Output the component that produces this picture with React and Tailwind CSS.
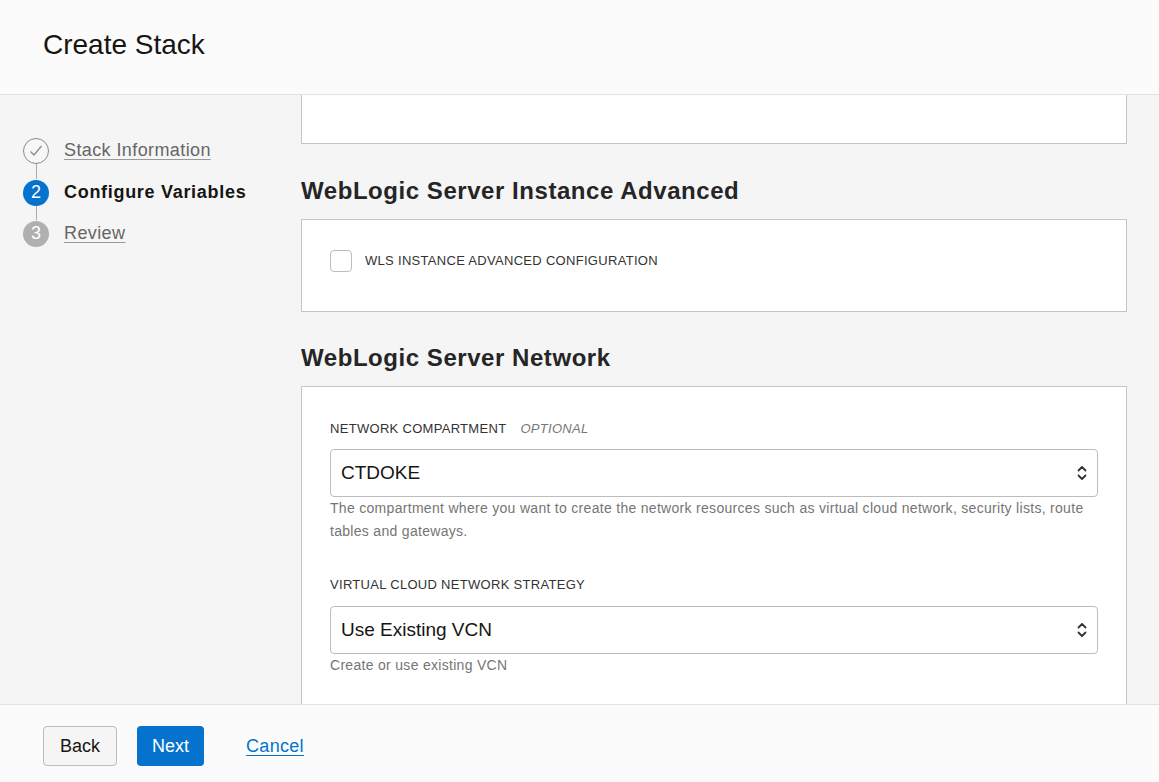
import React from 'react';

const font = { fontFamily: '"Liberation Sans", Arial, sans-serif' };

function Chevrons() {
  return (
    <svg className="w-[14px] h-[18px] text-[#333]" viewBox="0 0 14 18" fill="none" stroke="currentColor" strokeWidth="1.8" strokeLinecap="round" strokeLinejoin="round">
      <path d="M3.5 6.5 7 3l3.5 3.5" />
      <path d="M3.5 11.5 7 15l3.5-3.5" />
    </svg>
  );
}

function Select({ value }) {
  return (
    <div className="h-[48px] flex items-center justify-between pl-[10px] pr-[8px] bg-white border border-[#bcbcc2] rounded-[4px]">
      <span className="text-[19px] text-[#161513]">{value}</span>
      <Chevrons />
    </div>
  );
}

function Steps() {
  return (
    <div className="pl-[23px] pt-[42px]">
      <div className="flex items-center gap-[15px]">
        <div className="w-[26px] h-[26px] rounded-full border border-[#8a8a8a] flex items-center justify-center bg-[#f7f7f7]">
          <svg className="w-[16px] h-[16px]" viewBox="0 0 16 16" fill="none" stroke="#8a8a8a" strokeWidth="1.2">
            <path d="M2.5 8.5 6 12l7.5-9" />
          </svg>
        </div>
        <a className="text-[18px] tracking-[0.4px] text-[#666] underline underline-offset-[3px] decoration-[#999]">Stack Information</a>
      </div>
      <div className="ml-[12.5px] w-px h-[15px] bg-[#aaa]" />
      <div className="flex items-center gap-[15px]">
        <div className="w-[26px] h-[26px] rounded-full bg-[#0572ce] text-white text-[18px] flex items-center justify-center">2</div>
        <span className="text-[18px] tracking-[0.7px] font-bold text-[#161513]">Configure Variables</span>
      </div>
      <div className="ml-[12.5px] w-px h-[14px] bg-[#aaa]" />
      <div className="flex items-center gap-[15px]">
        <div className="w-[26px] h-[26px] rounded-full bg-[#b0b0b0] text-white text-[18px] flex items-center justify-center">3</div>
        <a className="text-[18px] tracking-[0.4px] text-[#666] underline underline-offset-[3px] decoration-[#999]">Review</a>
      </div>
    </div>
  );
}

export default function App() {
  return (
    <div className="h-screen flex flex-col bg-[#f5f5f5] overflow-hidden" style={font}>
      <header className="h-[95px] shrink-0 bg-[#fbfbfb] border-b border-[#e2e2e2] flex items-center pl-[43px] pb-[4px]">
        <h1 className="text-[28px] text-[#161513]">Create Stack</h1>
      </header>

      <main className="flex-1 min-h-0 flex overflow-hidden">
        <aside className="w-[301px] shrink-0">
          <Steps />
        </aside>

        <section className="flex-1 pr-[32px] overflow-hidden">
          <div className="h-[49px] bg-white border-x border-b border-[#c4c4ca]" />

          <h2 className="mt-[31px] mb-[12px] text-[24px] leading-[32px] font-bold tracking-[0.55px] text-[#252525]">WebLogic Server Instance Advanced</h2>
          <div className="h-[93px] bg-white border border-[#c4c4ca] px-[28px] pt-[30px] flex items-start">
            <div className="w-[22px] h-[22px] shrink-0 bg-white border border-[#bcbcc2] rounded-[4px]" />
            <span className="ml-[13px] h-[22px] flex items-center text-[13px] tracking-[0.3px] text-[#333]">WLS INSTANCE ADVANCED CONFIGURATION</span>
          </div>

          <h2 className="mt-[30px] mb-[12px] text-[24px] leading-[32px] font-bold tracking-[0.55px] text-[#252525]">WebLogic Server Network</h2>
          <div className="bg-white border border-[#c4c4ca] px-[28px] pt-[32px] pb-[40px]">
            <div className="flex items-center gap-[14px] h-[20px] text-[13px] tracking-[0.3px] text-[#333]">
              <span>NETWORK COMPARTMENT</span>
              <span className="italic text-[#777]">OPTIONAL</span>
            </div>
            <div className="mt-[10px]">
              <Select value="CTDOKE" />
            </div>
            <p className="text-[14px] leading-[23px] tracking-[0.3px] text-[#757575]">
              The compartment where you want to create the network resources such as virtual cloud network, security lists, route tables and gateways.
            </p>

            <div className="mt-[32px] h-[20px] flex items-center text-[13px] tracking-[0.3px] text-[#333]">VIRTUAL CLOUD NETWORK STRATEGY</div>
            <div className="mt-[11px]">
              <Select value="Use Existing VCN" />
            </div>
            <p className="text-[14px] leading-[23px] tracking-[0.3px] text-[#757575]">Create or use existing VCN</p>
          </div>
        </section>
      </main>

      <footer className="h-[78px] shrink-0 bg-[#fbfbfb] border-t border-[#e2e2e2] flex items-start pt-[21px] pl-[43px]">
        <button className="h-[40px] px-[16px] text-[18px] text-[#161513] bg-[#f5f5f5] border border-[#bcbcc2] rounded-[4px]">Back</button>
        <button className="ml-[20px] h-[40px] px-[15px] text-[18px] text-white bg-[#0572ce] rounded-[4px]">Next</button>
        <a className="ml-[42px] h-[40px] flex items-center text-[18px] tracking-[0.3px] text-[#0572ce] underline underline-offset-[3px]">Cancel</a>
      </footer>
    </div>
  );
}
